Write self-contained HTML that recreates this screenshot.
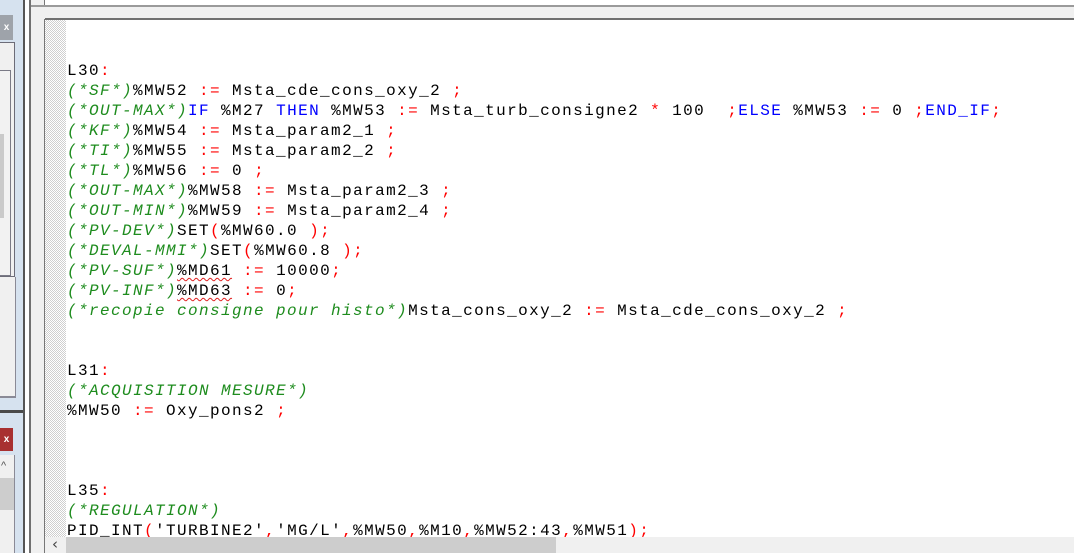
<!DOCTYPE html>
<html><head><meta charset="utf-8"><style>
*{margin:0;padding:0;box-sizing:border-box}
body{width:1074px;height:553px;overflow:hidden;background:#fff;position:relative;font-family:"Liberation Sans",sans-serif}
.a{position:absolute}
.code{position:absolute;left:67px;top:61px;font-family:"Liberation Mono",monospace;font-size:16px;letter-spacing:1.4px;line-height:20px;white-space:pre;color:#000}
.c{color:#1e8c1e;font-style:italic}
.k{color:#0000ff}
.r{color:#ff0000}
.w{text-decoration:underline wavy #e02020;text-decoration-thickness:1px;text-underline-offset:2px}
</style></head><body>
<div class="a" style="left:0;top:0;width:24px;height:553px;background:#d6e2ef"></div>
<div class="a" style="left:0;top:15px;width:13px;height:25px;background:#9ea3aa;color:#fff;font-size:10px;font-weight:bold;line-height:25px;text-align:center">x</div>
<div class="a" style="left:0;top:42px;width:15px;height:235px;border:1px solid #6c6c78;border-left:none;background:#f0f0f0"></div>
<div class="a" style="left:0;top:70px;width:11px;height:206px;border:1px solid #7a7a86;border-left:none;background:#f2f2f2"></div>
<div class="a" style="left:0;top:134px;width:4px;height:84px;background:#cacaca"></div>
<div class="a" style="left:0;top:277px;width:16px;height:120px;background:#f0f0f0;border-right:1px solid #8a8a96"></div>
<div class="a" style="left:0;top:396px;width:16px;height:2px;background:#8a8a96"></div>
<div class="a" style="left:0;top:410px;width:25px;height:3px;background:#4a4a4a"></div>
<div class="a" style="left:0;top:428px;width:13px;height:23px;background:#a83030;color:#fff;font-size:10px;font-weight:bold;line-height:23px;text-align:center">x</div>
<div class="a" style="left:0;top:455px;width:15px;height:98px;background:#f0f0f0;border-right:1px solid #8a8a96"></div>
<div class="a" style="left:0;top:478px;width:14px;height:32px;background:#cdcdcd"></div>
<div class="a" style="left:1px;top:460px;font-size:11px;color:#555">^</div>
<div class="a" style="left:23px;top:0;width:2px;height:553px;background:#555"></div>
<div class="a" style="left:25px;top:0;width:5px;height:553px;background:#fff"></div>
<div class="a" style="left:29px;top:0;width:2px;height:553px;background:#707070"></div>
<div class="a" style="left:31px;top:0;width:13px;height:553px;background:#f0f0f0"></div>
<div class="a" style="left:44px;top:0;width:1px;height:553px;background:#777"></div>
<div class="a" style="left:31px;top:5px;width:1043px;height:2px;background:#9a9a9a"></div>
<div class="a" style="left:31px;top:7px;width:1043px;height:12px;background:#f0f0f0"></div>
<div class="a" style="left:45px;top:18px;width:1029px;height:2px;background:#707070"></div>
<div class="a" style="left:45px;top:20px;width:21px;height:518px;background-color:#fff;background-image:repeating-conic-gradient(#cfcfcf 0 25%,#fff 0 50%);background-size:2px 2px"></div>
<div class="code">L30<span class="r">:</span>
<span class="c">(*SF*)</span>%MW52 <span class="r">:=</span> Msta_cde_cons_oxy_2 <span class="r">;</span>
<span class="c">(*OUT-MAX*)</span><span class="k">IF</span> %M27 <span class="k">THEN</span> %MW53 <span class="r">:=</span> Msta_turb_consigne2 <span class="r">*</span> 100  <span class="r">;</span><span class="k">ELSE</span> %MW53 <span class="r">:=</span> 0 <span class="r">;</span><span class="k">END_IF</span><span class="r">;</span>
<span class="c">(*KF*)</span>%MW54 <span class="r">:=</span> Msta_param2_1 <span class="r">;</span>
<span class="c">(*TI*)</span>%MW55 <span class="r">:=</span> Msta_param2_2 <span class="r">;</span>
<span class="c">(*TL*)</span>%MW56 <span class="r">:=</span> 0 <span class="r">;</span>
<span class="c">(*OUT-MAX*)</span>%MW58 <span class="r">:=</span> Msta_param2_3 <span class="r">;</span>
<span class="c">(*OUT-MIN*)</span>%MW59 <span class="r">:=</span> Msta_param2_4 <span class="r">;</span>
<span class="c">(*PV-DEV*)</span>SET<span class="r">(</span>%MW60.0 <span class="r">);</span>
<span class="c">(*DEVAL-MMI*)</span>SET<span class="r">(</span>%MW60.8 <span class="r">);</span>
<span class="c">(*PV-SUF*)</span><span class="w">%MD61</span> <span class="r">:=</span> 10000<span class="r">;</span>
<span class="c">(*PV-INF*)</span><span class="w">%MD63</span> <span class="r">:=</span> 0<span class="r">;</span>
<span class="c">(*recopie consigne pour histo*)</span>Msta_cons_oxy_2 <span class="r">:=</span> Msta_cde_cons_oxy_2 <span class="r">;</span>


L31<span class="r">:</span>
<span class="c">(*ACQUISITION MESURE*)</span>
%MW50 <span class="r">:=</span> Oxy_pons2 <span class="r">;</span>



L35<span class="r">:</span>
<span class="c">(*REGULATION*)</span>
PID_INT<span class="r">(</span>'TURBINE2'<span class="r">,</span>'MG/L'<span class="r">,</span>%MW50<span class="r">,</span>%M10<span class="r">,</span>%MW52:43<span class="r">,</span>%MW51<span class="r">);</span></div>
<div class="a" style="left:45px;top:537px;width:1029px;height:16px;background:#f0f0f0"></div>
<div class="a" style="left:66px;top:537px;width:490px;height:16px;background:#cdcdcd"></div>
<div class="a" style="left:52px;top:535px;font-size:15px;color:#444;font-family:'DejaVu Sans',sans-serif">‹</div>
</body></html>
